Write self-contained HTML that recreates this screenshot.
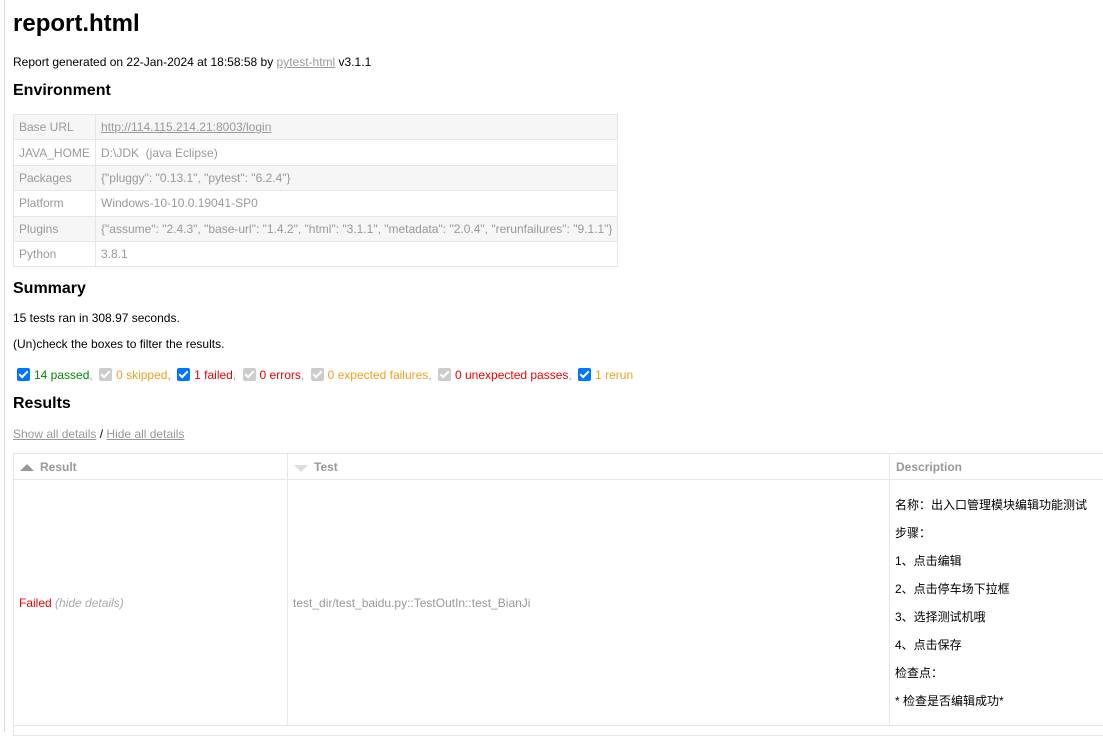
<!DOCTYPE html>
<html><head><meta charset="utf-8"><style>
body{margin:0;font-family:"Liberation Sans","Noto Sans CJK SC",sans-serif;font-size:12px;color:#000;width:1103px;height:732px;overflow:hidden;position:relative;background:#fff}
.gut{position:absolute;left:4px;top:0;width:1px;height:732px;background:#ddd}
.a{position:absolute;white-space:nowrap}
h1{position:absolute;left:13px;top:10px;margin:0;font-size:24px;font-weight:bold}
h2{position:absolute;left:13px;margin:0;font-size:16px;font-weight:bold}
a{color:#999;text-decoration:underline}
table.env{position:absolute;left:13px;top:114px;border-collapse:collapse;border:1px solid #e6e6e6;color:#999;white-space:nowrap}
table.env td{border:1px solid #e6e6e6;padding:0 5px;height:24.4px}
table.env tr:nth-child(odd){background:#f6f6f6}
.cb{display:inline-block;width:13px;height:13px;border-radius:2px;background:#0075ff;vertical-align:-2px;margin-right:4px;position:relative}
.cb.d{background:#ccc}
.cb::after{content:"";position:absolute;left:4px;top:1px;width:3px;height:7px;border:solid #fff;border-width:0 2px 2px 0;transform:rotate(45deg)}
.sep{color:#999;margin-right:3px}
table.res{position:absolute;left:13px;top:453px;border-collapse:collapse;width:1100px;color:#999}
table.res th{text-align:left;font-weight:bold;height:25px;border:1px solid #e6e6e6;padding:0 6px;color:#999}
table.res td{border:1px solid #e6e6e6;padding:0 5px;vertical-align:middle}
.desc div{height:28px;line-height:28px;color:#000}
.up{display:inline-block;border:7px solid transparent;border-top:0;border-bottom:7px solid #999;margin-right:6px;vertical-align:0}
.dn{display:inline-block;border:7px solid transparent;border-bottom:0;border-top:7px solid #ddd;margin-right:6px;vertical-align:-1px}
</style></head><body>
<div class="gut"></div>
<h1>report.html</h1>
<div class="a" style="left:13px;top:55px">Report generated on 22-Jan-2024 at 18:58:58 by <a>pytest-html</a> v3.1.1</div>
<h2 style="top:82px">Environment</h2>
<table class="env">
<tr><td style="width:71px">Base URL</td><td style="width:511px"><a>http://114.115.214.21:8003/login</a></td></tr>
<tr><td>JAVA_HOME</td><td>D:\JDK &nbsp;(java Eclipse)</td></tr>
<tr><td>Packages</td><td>{"pluggy": "0.13.1", "pytest": "6.2.4"}</td></tr>
<tr><td>Platform</td><td>Windows-10-10.0.19041-SP0</td></tr>
<tr><td>Plugins</td><td>{"assume": "2.4.3", "base-url": "1.4.2", "html": "3.1.1", "metadata": "2.0.4", "rerunfailures": "9.1.1"}</td></tr>
<tr><td>Python</td><td>3.8.1</td></tr>
</table>
<h2 style="top:280px">Summary</h2>
<div class="a" style="left:13px;top:311px">15 tests ran in 308.97 seconds.</div>
<div class="a" style="left:13px;top:337px">(Un)check the boxes to filter the results.</div>
<div class="a" style="left:17px;top:368px">
<span class="cb"></span><span style="color:#080">14 passed</span><span class="sep">,</span>
<span class="cb d"></span><span style="color:#f0a020">0 skipped</span><span class="sep">,</span>
<span class="cb"></span><span style="color:#e00">1 failed</span><span class="sep">,</span>
<span class="cb d"></span><span style="color:#e00">0 errors</span><span class="sep">,</span>
<span class="cb d"></span><span style="color:#f0a020">0 expected failures</span><span class="sep">,</span>
<span class="cb d"></span><span style="color:#e00">0 unexpected passes</span><span class="sep">,</span>
<span class="cb"></span><span style="color:#f0a020">1 rerun</span></div>
<h2 style="top:395px">Results</h2>
<div class="a" style="left:13px;top:427px"><a>Show all details</a> / <a>Hide all details</a></div>
<table class="res">
<tr><th style="width:261px"><span class="up"></span>Result</th><th style="width:589px"><span class="dn"></span>Test</th><th>Description</th></tr>
<tr style="height:246px"><td><span style="color:#e00">Failed</span> <i style="color:#aaa">(hide details)</i></td><td>test_dir/test_baidu.py::TestOutIn::test_BianJi</td>
<td class="desc"><div>名称：出入口管理模块编辑功能测试</div><div>步骤：</div><div>1、点击编辑</div><div>2、点击停车场下拉框</div><div>3、选择测试机哦</div><div>4、点击保存</div><div>检查点：</div><div>* 检查是否编辑成功*</div></td></tr>
<tr style="height:10px"><td colspan="3"></td></tr>
</table>
</body></html>
